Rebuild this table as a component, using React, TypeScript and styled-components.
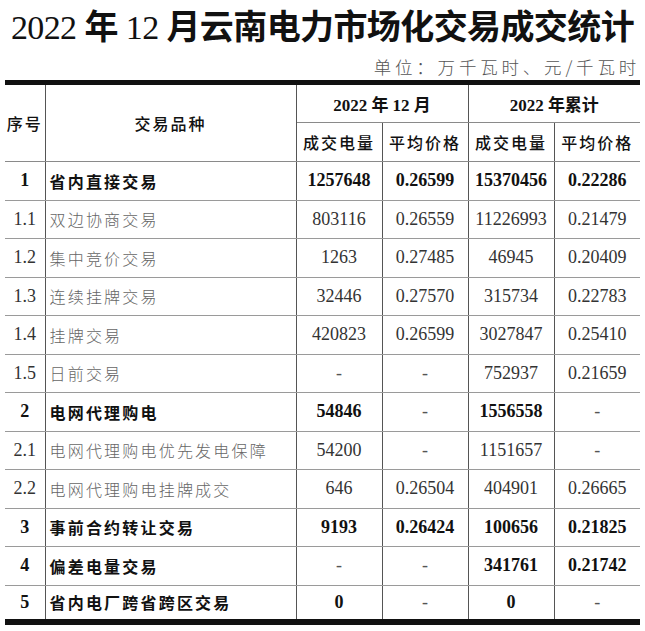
import styled, { createGlobalStyle } from "styled-components";

const GlobalStyle = createGlobalStyle`
  body {
    margin: 0;
    background: #fff;
  }
`;

const Page = styled.div`
  width: 645px;
  padding: 0 5px;
  box-sizing: border-box;
  font-family: "Liberation Serif", "Noto Sans CJK SC", serif;
  color: #111;
`;

const Title = styled.h1`
  margin: 0;
  height: 50px;
  font-size: 34px;
  line-height: 50px;
  font-weight: 400;
  white-space: nowrap;
  text-align: center;
  letter-spacing: -0.6px;
`;

const Han = styled.span`
  font-family: "Noto Sans CJK SC", sans-serif;
  font-weight: 700;
`;

const Unit = styled.div`
  padding-top: 4px;
  height: 26px;
  line-height: 26px;
  text-align: right;
  font-family: "Noto Sans CJK SC", sans-serif;
  font-size: 17.5px;
  font-weight: 300;
  letter-spacing: 3.8px;
  color: #555;
`;

const Table = styled.table`
  width: 635px;
  border-collapse: collapse;
  table-layout: fixed;
  border-top: 5px solid #111;
  border-bottom: 6px solid #111;
`;

const Row = styled.tr<{ $h?: number }>`
  height: ${(p) => p.$h ?? 38.5}px;
`;

const Head = styled.th`
  font-family: "Liberation Serif", "Noto Sans CJK SC", serif;
  font-size: 17px;
  font-weight: 700;
  color: #111;
  text-align: center;
  padding: 0;
  border-right: 1px solid #555;
  border-bottom: 1px solid #8a8a8a;
  white-space: nowrap;
  &:last-child {
    border-right: none;
  }
`;

const SubHead = styled(Head)`
  font-family: "Noto Sans CJK SC", sans-serif;
  font-weight: 500;
  font-size: 16px;
  letter-spacing: 2px;
`;

const Cell = styled.td<{ $bold?: boolean; $left?: boolean }>`
  padding: 0 0 0 ${(p) => (p.$left ? 4 : 0)}px;
  text-align: ${(p) => (p.$left ? "left" : "center")};
  font-size: 18px;
  font-weight: ${(p) => (p.$bold ? 700 : 400)};
  color: ${(p) => (p.$bold ? "#111" : "#333")};
  border-right: 1px solid #555;
  border-bottom: 1px solid #9a9a9a;
  white-space: nowrap;
  &:last-child {
    border-right: none;
  }
`;

const Name = styled(Cell)`
  font-family: "Noto Sans CJK SC", sans-serif;
  font-size: 16px;
  letter-spacing: 2.2px;
  color: ${(p) => (p.$bold ? "#111" : "#666")};
  font-weight: ${(p) => (p.$bold ? 700 : 300)};
`;

const Dash = styled.span`
  font-weight: 400;
  color: #555;
`;

type Item = {
  no: string;
  name: string;
  vals: string[];
  bold?: boolean;
};

const rows: Item[] = [
  { no: "1", name: "省内直接交易", vals: ["1257648", "0.26599", "15370456", "0.22286"], bold: true },
  { no: "1.1", name: "双边协商交易", vals: ["803116", "0.26559", "11226993", "0.21479"] },
  { no: "1.2", name: "集中竞价交易", vals: ["1263", "0.27485", "46945", "0.20409"] },
  { no: "1.3", name: "连续挂牌交易", vals: ["32446", "0.27570", "315734", "0.22783"] },
  { no: "1.4", name: "挂牌交易", vals: ["420823", "0.26599", "3027847", "0.25410"] },
  { no: "1.5", name: "日前交易", vals: ["-", "-", "752937", "0.21659"] },
  { no: "2", name: "电网代理购电", vals: ["54846", "-", "1556558", "-"], bold: true },
  { no: "2.1", name: "电网代理购电优先发电保障", vals: ["54200", "-", "1151657", "-"] },
  { no: "2.2", name: "电网代理购电挂牌成交", vals: ["646", "0.26504", "404901", "0.26665"] },
  { no: "3", name: "事前合约转让交易", vals: ["9193", "0.26424", "100656", "0.21825"], bold: true },
  { no: "4", name: "偏差电量交易", vals: ["-", "-", "341761", "0.21742"], bold: true },
  { no: "5", name: "省内电厂跨省跨区交易", vals: ["0", "-", "0", "-"], bold: true },
];

function App() {
  return (
    <Page>
      <GlobalStyle />
      <Title>
        2022 <Han>年</Han> 12 <Han>月云南电力市场化交易成交统计</Han>
      </Title>
      <Unit>单位：万千瓦时、元/千瓦时</Unit>
      <Table>
        <colgroup>
          <col style={{ width: 40 }} />
          <col style={{ width: 251 }} />
          <col style={{ width: 86 }} />
          <col style={{ width: 86 }} />
          <col style={{ width: 86 }} />
          <col style={{ width: 86 }} />
        </colgroup>
        <thead>
          <Row $h={40}>
            <SubHead rowSpan={2}>序号</SubHead>
            <SubHead rowSpan={2}>交易品种</SubHead>
            <Head colSpan={2}>2022 年 12 月</Head>
            <Head colSpan={2}>2022 年累计</Head>
          </Row>
          <Row $h={39}>
            <SubHead>成交电量</SubHead>
            <SubHead>平均价格</SubHead>
            <SubHead>成交电量</SubHead>
            <SubHead>平均价格</SubHead>
          </Row>
        </thead>
        <tbody>
          {rows.map((r) => (
            <Row key={r.no} $h={r.no === "5" ? 37 : 38.5}>
              <Cell $bold={r.bold}>{r.no}</Cell>
              <Name $bold={r.bold} $left>
                {r.name}
              </Name>
              {r.vals.map((v, i) => (
                <Cell key={i} $bold={r.bold}>
                  {v === "-" ? <Dash>-</Dash> : v}
                </Cell>
              ))}
            </Row>
          ))}
        </tbody>
      </Table>
    </Page>
  );
}

export default App;
